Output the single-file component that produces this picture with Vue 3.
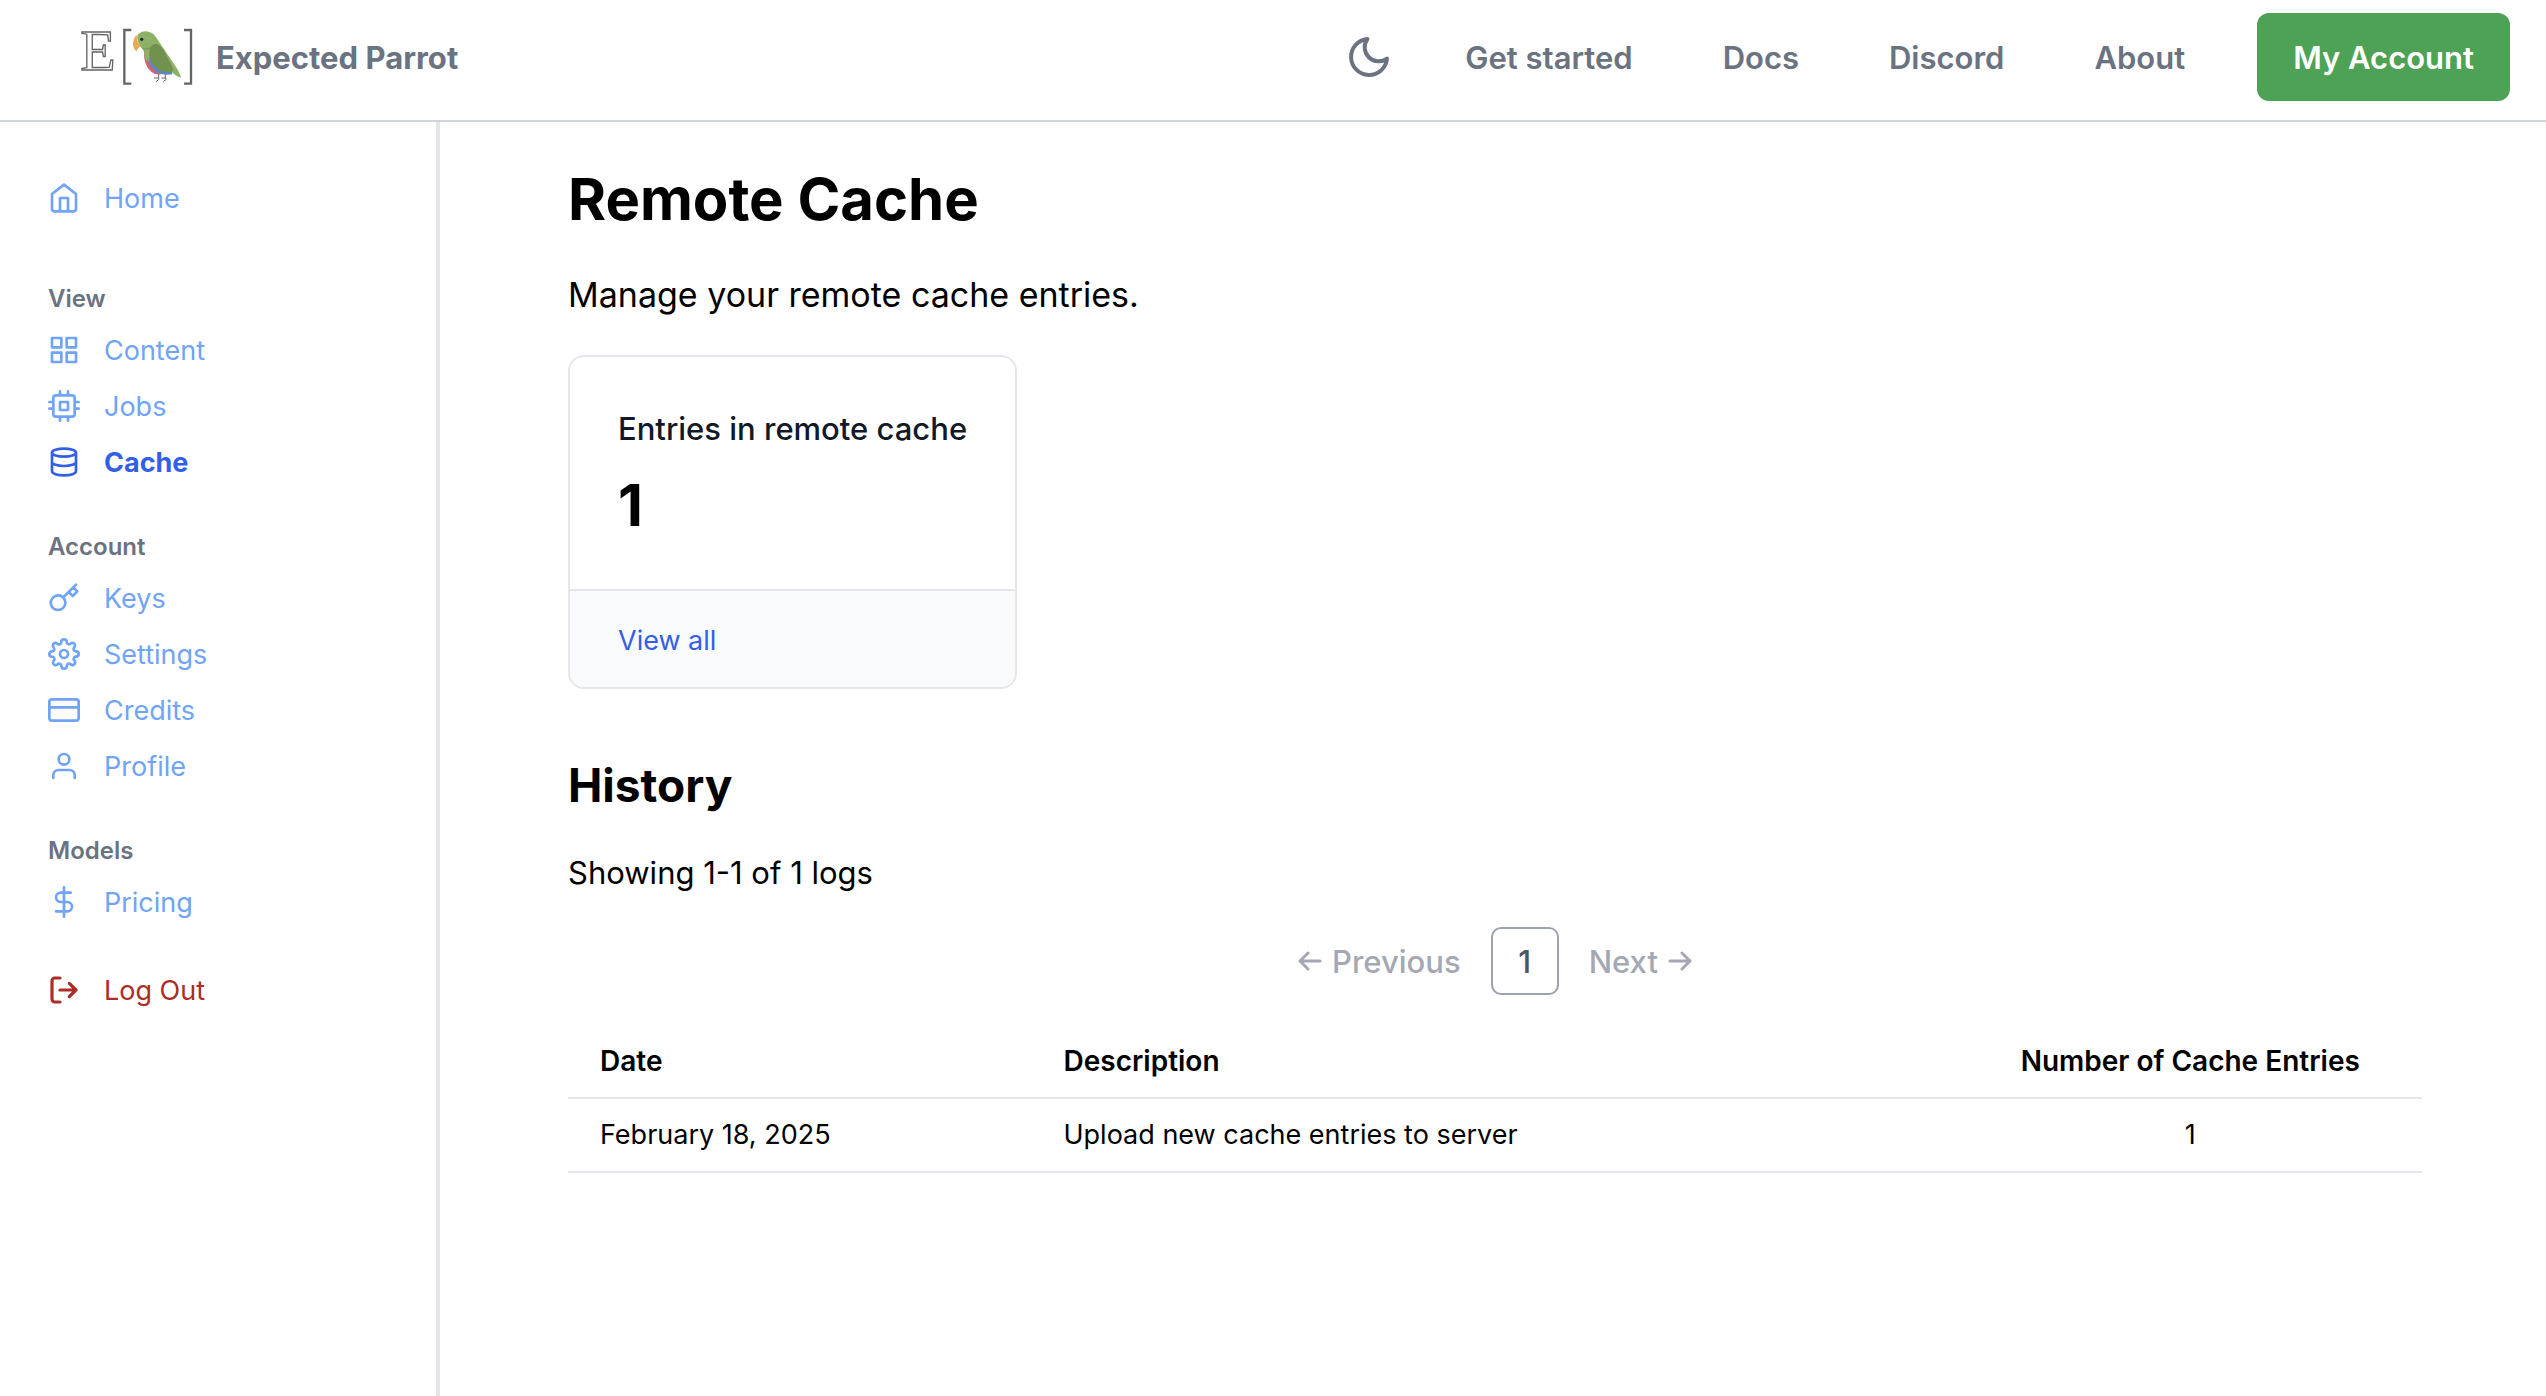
<script setup>
const navLinks = ['Get started', 'Docs', 'Discord', 'About']

const icons = {
  home: 'M3 9l9-7 9 7v11a2 2 0 0 1-2 2H5a2 2 0 0 1-2-2z M9 22V12h6v10',
  grid: 'M3 3h7v7H3z M14 3h7v7h-7z M14 14h7v7h-7z M3 14h7v7H3z',
  cpu: 'M6 4h12a2 2 0 0 1 2 2v12a2 2 0 0 1-2 2H6a2 2 0 0 1-2-2V6a2 2 0 0 1 2-2z M9 9h6v6H9z M9 1v3 M15 1v3 M9 20v3 M15 20v3 M20 9h3 M20 14h3 M1 9h3 M1 14h3',
  database: 'M21 5c0 1.66-4.03 3-9 3S3 6.66 3 5s4.03-3 9-3 9 1.34 9 3z M21 12c0 1.66-4 3-9 3s-9-1.34-9-3 M3 5v14c0 1.66 4 3 9 3s9-1.34 9-3V5',
  key: 'M21 2l-2 2m-7.61 7.61a5.5 5.5 0 1 1-7.778 7.778 5.5 5.5 0 0 1 7.777-7.777zm0 0L15.5 7.5m0 0l3 3L22 7l-3-3m-3.5 3.5L19 4',
  settings: 'M15 12a3 3 0 1 1-6 0 3 3 0 0 1 6 0z M19.4 15a1.65 1.65 0 0 0 .33 1.82l.06.06a2 2 0 0 1 0 2.83 2 2 0 0 1-2.83 0l-.06-.06a1.65 1.65 0 0 0-1.82-.33 1.65 1.65 0 0 0-1 1.51V21a2 2 0 0 1-2 2 2 2 0 0 1-2-2v-.09A1.65 1.65 0 0 0 9 19.4a1.65 1.65 0 0 0-1.82.33l-.06.06a2 2 0 0 1-2.83 0 2 2 0 0 1 0-2.83l.06-.06a1.65 1.65 0 0 0 .33-1.82 1.65 1.65 0 0 0-1.51-1H3a2 2 0 0 1-2-2 2 2 0 0 1 2-2h.09A1.65 1.65 0 0 0 4.6 9a1.65 1.65 0 0 0-.33-1.82l-.06-.06a2 2 0 0 1 0-2.83 2 2 0 0 1 2.83 0l.06.06a1.65 1.65 0 0 0 1.82.33H9a1.65 1.65 0 0 0 1-1.51V3a2 2 0 0 1 2-2 2 2 0 0 1 2 2v.09a1.65 1.65 0 0 0 1 1.51 1.65 1.65 0 0 0 1.82-.33l.06-.06a2 2 0 0 1 2.83 0 2 2 0 0 1 0 2.83l-.06.06a1.65 1.65 0 0 0-.33 1.82V9a1.65 1.65 0 0 0 1.51 1H21a2 2 0 0 1 2 2 2 2 0 0 1-2 2h-.09a1.65 1.65 0 0 0-1.51 1z',
  card: 'M3 4h18a2 2 0 0 1 2 2v12a2 2 0 0 1-2 2H3a2 2 0 0 1-2-2V6a2 2 0 0 1 2-2z M1 10h22',
  user: 'M20 21v-2a4 4 0 0 0-4-4H8a4 4 0 0 0-4 4v2 M16 7a4 4 0 1 1-8 0 4 4 0 0 1 8 0z',
  dollar: 'M12 1v22 M17 5H9.5a3.5 3.5 0 0 0 0 7h5a3.5 3.5 0 0 1 0 7H6',
}

const groups = [
  {
    title: 'View',
    items: [
      { label: 'Content', icon: 'grid' },
      { label: 'Jobs', icon: 'cpu' },
      { label: 'Cache', icon: 'database', active: true },
    ],
  },
  {
    title: 'Account',
    items: [
      { label: 'Keys', icon: 'key' },
      { label: 'Settings', icon: 'settings' },
      { label: 'Credits', icon: 'card' },
      { label: 'Profile', icon: 'user' },
    ],
  },
  { title: 'Models', items: [{ label: 'Pricing', icon: 'dollar' }] },
]

const logs = [
  { date: 'February 18, 2025', description: 'Upload new cache entries to server', count: 1 },
]
</script>

<template>
  <div class="page">
    <header class="topbar">
      <a class="brand" href="#">
        <svg class="logo" viewBox="60 81 336 180" aria-hidden="true">
          <text class="logo-letter" x="61" y="211">E</text>
          <path d="M214 90H193V251H214M372 90H393V251H372" fill="none" stroke="#666" stroke-width="7" />
          <path d="M296 222v12M316 222v12M282 234h14q4 4-8 11M304 234h14q4 4-8 11" fill="none" stroke="#666" stroke-width="3" />
          <path d="M252 152Q250 196 274 216Q288 226 304 223L300 150Z" fill="#d0636f" />
          <path d="M266 150Q260 190 284 212Q304 228 337 223L330 190Z" fill="#5b87c4" />
          <path d="M231 112Q234 95 256 94Q276 95 287 110L350 204Q361 222 363 233Q350 230 334 215L274 160Q268 170 266 186L254 176Q255 156 249 149Q236 138 231 112Z" fill="#8db267" />
          <path d="M288 131Q300 134 310 148L340 206Q341 216 330 217Q300 217 282 197Q266 178 268 155Q270 132 288 131Z" fill="#71914e" />
          <path d="M248 146Q260 151 271 143" fill="none" stroke="#71914e" stroke-width="3" />
          <path d="M230 104Q218 116 219 136Q221 148 229 154Q234 144 241 138Q230 124 230 104Z" fill="#e7aa55" />
          <circle cx="245" cy="118" r="5" fill="#262b2e" />
        </svg>
        <span>Expected Parrot</span>
      </a>
      <nav class="topnav" aria-label="Main">
        <button class="theme" type="button" aria-label="Toggle dark mode">
          <svg viewBox="0 0 24 24" class="moon"><path d="M21 12.79A9 9 0 1 1 11.21 3 7 7 0 0 0 21 12.79z" /></svg>
        </button>
        <div class="toplinks">
          <a v-for="link in navLinks" :key="link" href="#">{{ link }}</a>
        </div>
        <button class="account" type="button">My Account</button>
      </nav>
    </header>

    <div class="body">
      <aside class="sidebar">
        <nav aria-label="Account sections">
          <a class="side-link" href="#">
            <svg class="icon" viewBox="0 0 24 24"><path :d="icons.home" /></svg>
            <span>Home</span>
          </a>
          <section v-for="group in groups" :key="group.title" class="group">
            <h3>{{ group.title }}</h3>
            <a
              v-for="item in group.items"
              :key="item.label"
              class="side-link"
              :class="{ active: item.active }"
              href="#"
            >
              <svg class="icon" viewBox="0 0 24 24"><path :d="icons[item.icon]" /></svg>
              <span>{{ item.label }}</span>
            </a>
          </section>
          <button class="side-link logout" type="button">
            <svg class="icon" viewBox="0 0 24 24">
              <path d="M9 21H5a2 2 0 0 1-2-2V5a2 2 0 0 1 2-2h4 M16 17l5-5-5-5 M21 12H9" />
            </svg>
            <span>Log Out</span>
          </button>
        </nav>
      </aside>

      <main class="content">
        <h1>Remote Cache</h1>
        <p class="lead">Manage your remote cache entries.</p>

        <section class="card">
          <div class="card-body">
            <div class="card-label">Entries in remote cache</div>
            <div class="card-value">1</div>
          </div>
          <div class="card-footer"><a href="#">View all</a></div>
        </section>

        <h2>History</h2>
        <p class="showing">Showing 1-1 of 1 logs</p>

        <nav class="pagination" aria-label="Pagination">
          <button class="step" type="button" disabled>
            <svg class="arrow" viewBox="0 0 24 24"><path d="M22 12H2 M10 4l-8 8 8 8" /></svg>
            <span>Previous</span>
          </button>
          <button class="current" type="button" aria-current="page">1</button>
          <button class="step" type="button" disabled>
            <span>Next</span>
            <svg class="arrow" viewBox="0 0 24 24"><path d="M2 12h20 M14 4l8 8-8 8" /></svg>
          </button>
        </nav>

        <table>
          <thead>
            <tr>
              <th class="col-date">Date</th>
              <th class="col-description">Description</th>
              <th class="col-count">Number of Cache Entries</th>
            </tr>
          </thead>
          <tbody>
            <tr v-for="log in logs" :key="log.date">
              <td>{{ log.date }}</td>
              <td>{{ log.description }}</td>
              <td class="col-count">{{ log.count }}</td>
            </tr>
          </tbody>
        </table>
      </main>
    </div>
  </div>
</template>

<style>
body {
  background: #fff;
}
</style>

<style scoped>
.page {
  display: flex;
  flex-direction: column;
  min-height: 100vh;
  color: #000;
  font-family: Inter, "Liberation Sans", sans-serif;
}

h1, h2, h3, p {
  margin: 0;
}

a {
  color: inherit;
  text-decoration: none;
}

button {
  margin: 0;
  padding: 0;
  border: 0;
  background: none;
  color: inherit;
  font: inherit;
}

svg {
  display: block;
  flex: none;
}

/* Top bar */
.topbar {
  display: flex;
  align-items: center;
  justify-content: space-between;
  padding: 13px 36px 19px 80px;
  border-bottom: 2px solid #d1d5db;
  color: #6b7280;
  font-size: 31px;
  font-weight: 600;
}

.brand {
  display: flex;
  align-items: center;
  gap: 24px;
  font-weight: 700;
}

.logo {
  width: 112px;
  height: 60px;
  overflow: visible;
}

.logo-letter {
  fill: none;
  stroke: #666;
  stroke-width: 4px;
  font-family: "Liberation Serif", serif;
  font-size: 174px;
  font-weight: 400;
}

.topnav {
  display: flex;
  align-items: center;
  gap: 72px;
}

.toplinks {
  display: flex;
  gap: 90px;
}

.moon {
  width: 48px;
  height: 48px;
  fill: none;
  stroke: currentColor;
  stroke-width: 2;
  stroke-linecap: round;
  stroke-linejoin: round;
}

.account {
  height: 88px;
  padding: 0 36px;
  border-radius: 12px;
  background: #4da255;
  color: #fff;
}

/* Sidebar */
.body {
  display: flex;
  flex: 1;
}

.sidebar {
  box-sizing: border-box;
  flex: none;
  width: 440px;
  padding: 48px;
  border-right: 4px solid #e5e6eb;
}

.side-link {
  display: flex;
  align-items: center;
  gap: 24px;
  height: 56px;
  color: #70a4f8;
  font-size: 27px;
}

.side-link.active {
  color: #335fe6;
  font-weight: 700;
}

.icon {
  width: 32px;
  height: 32px;
  fill: none;
  stroke: currentColor;
  stroke-width: 2;
  stroke-linecap: round;
  stroke-linejoin: round;
}

.group {
  margin-top: 40px;
}

.side-link + .group {
  margin-top: 56px;
}

.group h3 {
  margin-bottom: 6px;
  color: #6b7280;
  font-size: 24px;
  font-weight: 600;
  line-height: 34px;
}

.logout {
  margin-top: 32px;
  color: #ab2d25;
}

.logout .icon {
  stroke-width: 2.4;
}

/* Content */
.content {
  flex: 1;
  padding: 40px 124px 40px 128px;
}

h1 {
  font-size: 58px;
  font-weight: 700;
  line-height: 74px;
}

.lead {
  margin-top: 31px;
  font-size: 34px;
  line-height: 56px;
}

.card {
  width: fit-content;
  margin-top: 32px;
  overflow: hidden;
  border: 2px solid #e5e6eb;
  border-radius: 16px;
}

.card-body {
  padding: 48px;
}

.card-label {
  color: #111827;
  font-size: 31px;
  font-weight: 500;
  line-height: 48px;
}

.card-value {
  margin-top: 16px;
  font-size: 58px;
  font-weight: 700;
  line-height: 72px;
}

.card-footer {
  padding: 28px 48px 24px;
  border-top: 2px solid #e5e6eb;
  background: #f9fafc;
  color: #335fe6;
  font-size: 27px;
  line-height: 44px;
}

h2 {
  margin-top: 67px;
  font-size: 46px;
  font-weight: 700;
  line-height: 58px;
}

.showing {
  margin-top: 35px;
  font-size: 31px;
  line-height: 48px;
}

.pagination {
  display: flex;
  align-items: center;
  justify-content: center;
  gap: 30px;
  margin-top: 30px;
  font-size: 31px;
  font-weight: 500;
}

.step {
  display: flex;
  align-items: center;
  gap: 10px;
  color: #a5a8b2;
}

.arrow {
  width: 24px;
  height: 24px;
  fill: none;
  stroke: currentColor;
  stroke-width: 3;
  stroke-linecap: round;
  stroke-linejoin: round;
}

.current {
  box-sizing: border-box;
  width: 68px;
  height: 68px;
  border: 2px solid #9ca3af;
  border-radius: 10px;
  color: #4b5563;
}

table {
  width: 100%;
  margin-top: 30px;
  border-collapse: separate;
  border-spacing: 0;
  table-layout: fixed;
  font-size: 27px;
  line-height: 40px;
}

th, td {
  padding: 16px 32px;
  border-bottom: 2px solid #e5e6eb;
  text-align: left;
}

th {
  font-size: 28px;
  font-weight: 600;
}

.col-date {
  width: 25%;
  box-sizing: border-box;
}

.col-description {
  width: 50%;
  box-sizing: border-box;
}

th.col-count,
td.col-count {
  text-align: center;
}
</style>
